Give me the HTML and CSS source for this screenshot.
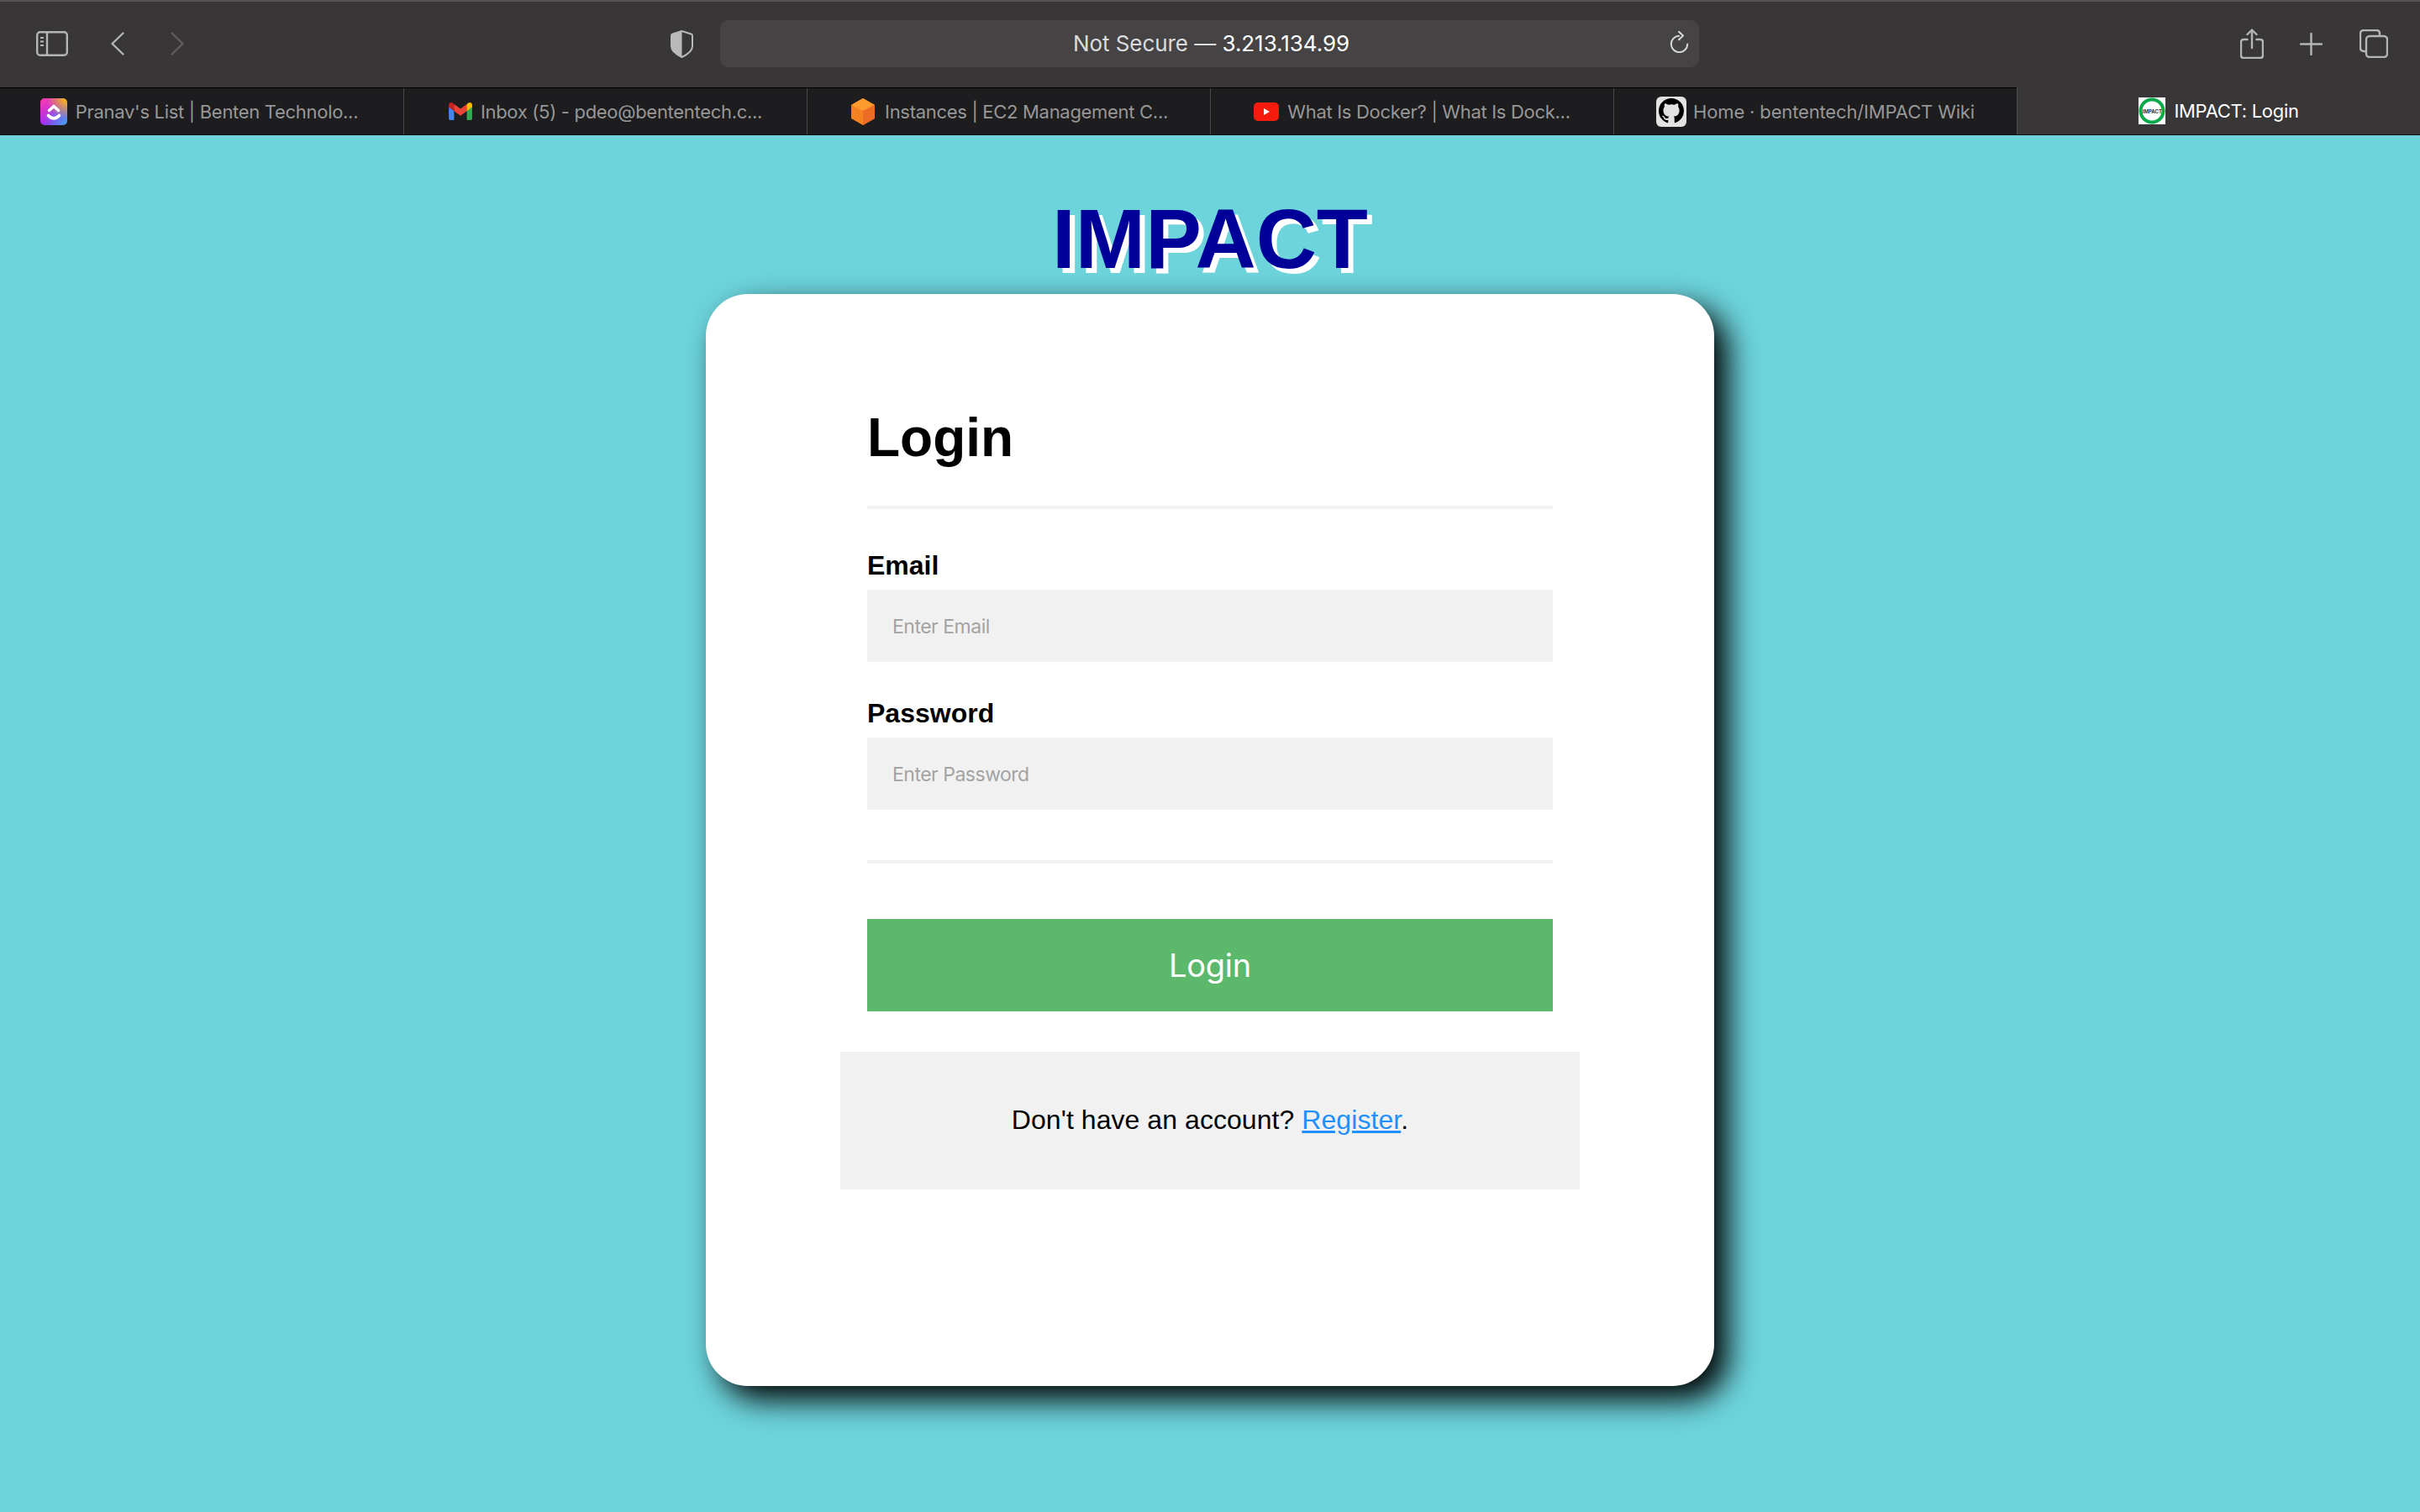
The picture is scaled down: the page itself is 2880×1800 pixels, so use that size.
FILE: index.html
```html
<!DOCTYPE html>
<html lang="en">

<head>
  <meta charset="utf-8">
  <title>IMPACT: Login</title>
  <link rel="stylesheet" href="styles.css">
</head>

<body>

  <header class="toolbar">
    <div class="nav-group">
      <svg class="icon-sidebar" viewBox="0 0 38 30" fill="none" stroke="#b5b5b5" stroke-width="2.4">
        <rect x="1.2" y="1.2" width="35.6" height="27.6" rx="3.5" />
        <path d="M13 1v28" />
        <path d="M5 8h4M5 12.500h4M5 17h4" stroke-width="2" />
      </svg>
      <svg class="icon-back" viewBox="0 0 16 28" fill="none" stroke="#b5b5b5" stroke-width="2.4" stroke-linecap="round" stroke-linejoin="round">
        <path d="M14.500 1.500L1.500 14l13 12.500" />
      </svg>
      <svg class="icon-forward" viewBox="0 0 16 28" fill="none" stroke="#605e5f" stroke-width="2.400" stroke-linecap="round" stroke-linejoin="round">
        <path d="M1.500 1.500L14.500 14l-13 12.500" />
      </svg>
    </div>

    <div class="address-group">
      <svg class="icon-shield" viewBox="0 0 27 33">
        <path d="M13.500 1L2.500 4.500C1.500 4.800 1 5.500 1 6.500V19c0 4.500 3 8.500 12.500 13C23 27.500 26 23.500 26 19V6.500c0-1-.5-1.700-1.500-2z" fill="none" stroke="#b9b9b9" stroke-width="2" />
        <path d="M13.500 1L2.500 4.500C1.500 4.800 1 5.500 1 6.500V19c0 4.500 3 8.500 12.500 13z" fill="#b9b9b9" />
      </svg>
      <div class="address-bar">
        <span class="address-text"><span class="address-note">Not Secure —</span> 3.213.134.99</span>
        <svg class="icon-reload" viewBox="0 0 23 26" fill="none" stroke="#d8d8d8" stroke-width="2" stroke-linecap="round" stroke-linejoin="round">
          <path d="M11 5.800A9.700 9.700 0 1 0 21.200 15.500" />
          <path d="M11 .8L16 5.500 11 10.200" />
        </svg>
      </div>
    </div>

    <div class="action-group">
      <svg class="icon-share" viewBox="0 0 28 36" fill="none" stroke="#b5b5b5" stroke-width="2.400" stroke-linecap="round" stroke-linejoin="round">
        <path d="M8.500 13H4c-1.800 0-3 1.200-3 3v16c0 1.800 1.200 3 3 3h20c1.800 0 3-1.200 3-3V16c0-1.800-1.200-3-3-3h-4.500" />
        <path d="M14 23V2M8.500 7L14 1.500 19.500 7" />
      </svg>
      <svg class="icon-plus" viewBox="0 0 27 27" fill="none" stroke="#b5b5b5" stroke-width="2.400" stroke-linecap="round">
        <path d="M13.500 1v25M1 13.500h25" />
      </svg>
      <svg class="icon-tabs" viewBox="0 0 34 34" fill="none" stroke="#b5b5b5" stroke-width="2.400" stroke-linejoin="round">
        <rect x="8" y="8" width="25" height="25" rx="4" />
        <path d="M8 26H5c-2.500 0-4-1.500-4-4V5c0-2.500 1.500-4 4-4h15c2.500 0 4 1.500 4 4v3" />
      </svg>
    </div>
  </header>

  <nav class="tab-bar">
    <a class="tab">
      <span class="fav-clickup">
        <svg viewBox="0 0 32 32" fill="none" stroke="#fff" stroke-width="3.600" stroke-linecap="round" stroke-linejoin="round">
          <path d="M10.500 14.500L16 9.500l5.500 5" />
          <path d="M9.500 20.500c4 4.500 9 4.500 13 0" />
        </svg>
      </span>
      Pranav's List | Benten Technolo...
    </a>
    <a class="tab">
      <svg class="fav-gmail" viewBox="0 0 256 193">
        <path d="M58.182 192.050V93.140L27.507 65.077 0 49.504v125.091c0 9.658 7.825 17.455 17.455 17.455h40.727z" fill="#4285f4" />
        <path d="M197.818 192.050h40.727c9.659 0 17.455-7.826 17.455-17.455V49.505l-31.156 17.837-27.026 25.798v98.910z" fill="#34a853" />
        <path d="M58.182 93.140l-4.174-38.647 4.174-36.989L128 69.868l69.818-52.364 4.669 34.992-4.669 40.644L128 145.504z" fill="#ea4335" />
        <path d="M197.818 17.504V93.140L256 49.504V26.231c0-21.585-24.640-33.890-41.890-20.945l-16.292 12.218z" fill="#fbbc04" />
        <path d="M0 49.504l26.759 20.070L58.182 93.140V17.504L41.890 5.286C24.610-7.660 0 4.646 0 26.230v23.273z" fill="#c5221f" />
      </svg>
      Inbox (5) - pdeo@bententech.c...
    </a>
    <a class="tab">
      <svg class="fav-cube" viewBox="0 0 32 32">
        <path d="M16 0l14 8v16l-14 8-14-8V8z" fill="#f58220" />
        <path d="M16 0l14 8-14 7L2 8z" fill="#ff9a2e" />
        <path d="M16 15l14-7v16l-14 8z" fill="#ec6c26" />
      </svg>
      Instances | EC2 Management C...
    </a>
    <a class="tab">
      <svg class="fav-youtube" viewBox="0 0 30 22">
        <rect width="30" height="22" rx="5" fill="#f61c0d" />
        <path d="M12 7l7 4-7 4z" fill="#fff" />
      </svg>
      What Is Docker? | What Is Dock...
    </a>
    <a class="tab tab-wiki">
      <span class="fav-github">
        <svg viewBox="0 0 16 16">
          <path d="M8 0C3.580 0 0 3.580 0 8c0 3.540 2.290 6.530 5.470 7.590.4.070.55-.17.55-.38 0-.19-.01-.82-.01-1.490-2.010.37-2.530-.49-2.690-.94-.09-.23-.48-.94-.82-1.130-.28-.15-.68-.52-.01-.53.63-.01 1.080.58 1.230.82.72 1.210 1.870.87 2.330.66.07-.52.28-.87.51-1.070-1.780-.2-3.640-.89-3.640-3.950 0-.87.31-1.590.82-2.150-.08-.2-.36-1.020.08-2.120 0 0 .67-.21 2.200.82.64-.18 1.320-.27 2-.27.68 0 1.360.09 2 .27 1.530-1.040 2.200-.82 2.200-.82.44 1.100.16 1.920.08 2.120.51.56.82 1.270.82 2.150 0 3.070-1.870 3.750-3.650 3.950.29.25.54.73.54 1.480 0 1.070-.01 1.930-.01 2.200 0 .21.15.46.55.38A8.013 8.013 0 0 0 16 8c0-4.420-3.580-8-8-8z" fill="#000" />
        </svg>
      </span>
      Home · bententech/IMPACT Wiki
    </a>
    <a class="tab tab-active">
      <span class="fav-impact"><span class="fav-impact-text">IMPACT</span></span>
      IMPACT: Login
    </a>
  </nav>

  <main class="page">
    <h1 class="site-title">IMPACT</h1>

    <section class="card">
      <form class="login-form">
        <h2 class="form-title">Login</h2>
        <hr class="rule rule-top">

        <label class="field-label field-email" for="email">Email</label>
        <input class="field-input" id="email" type="text" placeholder="Enter Email">

        <label class="field-label field-password" for="password">Password</label>
        <input class="field-input" id="password" type="password" placeholder="Enter Password">

        <hr class="rule rule-bottom">

        <button class="login-btn" type="button">Login</button>
      </form>

      <div class="signup-box">
        <p>Don't have an account? <a href="#">Register</a>.</p>
      </div>
    </section>
  </main>

</body>

</html>
```

FILE: styles.css
```css
* {
  box-sizing: border-box;
}

body {
  margin: 0;
  height: 100vh;
  display: flex;
  flex-direction: column;
  overflow: hidden;
  background-color: #6dd4dc;
  font-family: "Liberation Sans", Arial, sans-serif;
}

svg {
  display: block;
  flex: none;
}

/* browser chrome */
.toolbar {
  height: 105px;
  padding-bottom: 2px;
  display: grid;
  grid-template-columns: 798px 1224px 1fr;
  align-items: center;
  background-color: #383637;
  border-top: 2px solid #555354;
  border-bottom: 1px solid #000;
  font-family: Inter, "Noto Sans", sans-serif;
}

.nav-group {
  display: flex;
  align-items: center;
  padding-left: 43px;
}

.icon-sidebar {
  width: 38px;
  height: 30px;
}

.icon-back {
  width: 16px;
  height: 28px;
  margin-left: 51px;
}

.icon-forward {
  width: 16px;
  height: 28px;
  margin-left: 55px;
}

.address-group {
  display: flex;
  align-items: center;
  gap: 32px;
}

.icon-shield {
  width: 27px;
  height: 33px;
}

.address-bar {
  position: relative;
  width: 1165px;
  height: 56px;
  display: flex;
  align-items: center;
  justify-content: center;
  border-radius: 10px;
  background-color: #454344;
  color: #fff;
  font-size: 26px;
}

.address-text {
  padding-left: 4px;
  padding-bottom: 1px;
  letter-spacing: -0.05px;
}

.address-note {
  color: #dcdcdc;
}

.icon-reload {
  position: absolute;
  right: 12px;
  top: 13px;
  width: 23px;
  height: 26px;
}

.action-group {
  display: flex;
  align-items: center;
  justify-content: flex-end;
  padding-right: 38px;
}

.icon-share {
  width: 28px;
  height: 36px;
}

.icon-plus {
  width: 27px;
  height: 27px;
  margin-left: 43px;
}

.icon-tabs {
  width: 34px;
  height: 34px;
  margin-left: 44px;
}

.tab-bar {
  height: 56px;
  display: grid;
  grid-template-columns: repeat(6, 1fr);
  background-color: #1d1c1e;
  border-bottom: 1px solid #111;
  font-family: Inter, "Noto Sans", sans-serif;
}

.tab {
  display: flex;
  align-items: center;
  justify-content: center;
  gap: 10px;
  border-left: 1px solid #4a494a;
  color: #979797;
  font-size: 22px;
  letter-spacing: -0.3px;
  white-space: nowrap;
}

.tab:first-child {
  padding-right: 6px;
  border-left: 0;
}

.tab-wiki {
  gap: 8px;
  letter-spacing: -0.15px;
}

.tab-active {
  margin-top: -1px;
  background-color: #383637;
  color: #fff;
}

.fav-clickup {
  width: 32px;
  height: 32px;
  border-radius: 5px;
  background:
    radial-gradient(circle at 100% 0, #ffc800 0, transparent 55%),
    radial-gradient(circle at 100% 100%, #3fa8f5 0, transparent 65%),
    radial-gradient(circle at 0 0, #ff3cac 0, transparent 70%),
    #a32cf0;
}

.fav-gmail {
  width: 28px;
  height: 21px;
}

.fav-cube {
  width: 32px;
  height: 32px;
}

.fav-youtube {
  width: 30px;
  height: 22px;
}

.fav-github {
  width: 36px;
  height: 36px;
  padding: 2px 3px;
  border-radius: 6px;
  background-color: #e2e2e2;
}

.fav-impact {
  width: 32px;
  height: 32px;
  display: flex;
  align-items: center;
  justify-content: center;
  background-color: #fff;
  background-image: radial-gradient(circle, #fff 0 11px, #0aa94a 12px 15px, #fff 16px);
}

.fav-impact-text {
  color: #333;
  font-size: 6px;
  font-weight: bold;
  letter-spacing: 0;
}

/* page */
.page {
  flex: 1;
  display: flex;
  flex-direction: column;
  align-items: center;
  padding-top: 73px;
}

.site-title {
  margin: 0 0 16px;
  color: #000099;
  font-size: 100px;
  line-height: 100px;
  text-shadow: 6px 6px 0 #fff;
}

.card {
  width: 1200px;
  height: 1300px;
  padding-top: 134px;
  display: flex;
  flex-direction: column;
  align-items: center;
  border-radius: 50px;
  background-color: #fff;
  box-shadow: 16px 16px 36px #000;
}

.login-form {
  width: 816px;
}

.form-title {
  margin: 0 0 44px;
  color: #000;
  font-size: 64px;
  line-height: 74px;
}

.rule {
  height: 4px;
  margin: 0;
  border: 0;
  background-color: #f1f1f1;
}

.field-label {
  display: block;
  margin-bottom: 11px;
  color: #000;
  font-size: 32px;
  font-weight: bold;
  line-height: 36px;
}

.field-email {
  margin-top: 49px;
}

.field-password {
  margin-top: 43px;
}

.field-input {
  display: block;
  width: 100%;
  height: 86px;
  padding: 2px 30px 0;
  border: 0;
  outline: 0;
  background-color: #f1f1f1;
  font-family: Inter, "Noto Sans", sans-serif;
  font-size: 23px;
  letter-spacing: -0.5px;
}

.field-input::placeholder {
  color: #a3a3a3;
  opacity: 1;
}

.rule-bottom {
  margin-top: 60px;
}

.login-btn {
  display: block;
  width: 100%;
  height: 110px;
  margin-top: 66px;
  border: 0;
  background-color: #5cb96b;
  color: #fff;
  font-family: Inter, "Noto Sans", sans-serif;
  font-size: 38px;
  letter-spacing: -0.2px;
}

.signup-box {
  width: 880px;
  height: 164px;
  margin-top: 48px;
  padding-bottom: 2px;
  display: flex;
  align-items: center;
  justify-content: center;
  background-color: #f1f1f1;
  color: #000;
  font-size: 32px;
  letter-spacing: 0.06px;
}

.signup-box p {
  margin: 0;
}

.signup-box a {
  color: #1e90ff;
}
```
